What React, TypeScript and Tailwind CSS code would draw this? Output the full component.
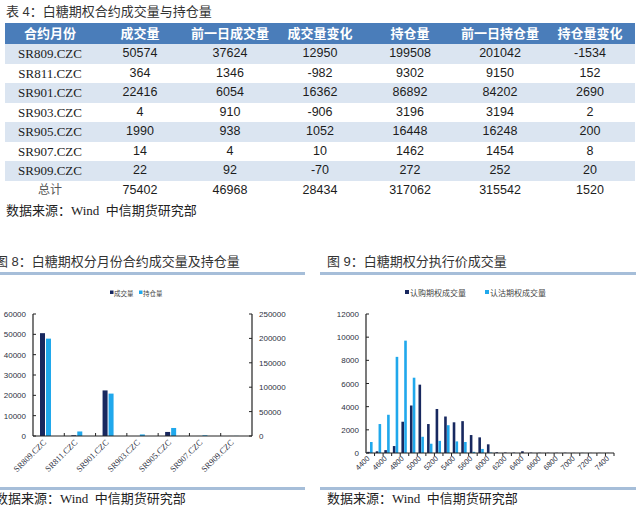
const SANS = "font-['Liberation_Sans','Noto_Sans_CJK_SC',sans-serif]";
const SERIF = "font-['Liberation_Serif',serif]";
const SRC = "font-['Liberation_Serif','Noto_Sans_CJK_SC',serif]";

const head = ["合约月份", "成交量", "前一日成交量", "成交量变化", "持仓量", "前一日持仓量", "持仓量变化"];

const rows = [
  ["SR809.CZC", "50574", "37624", "12950", "199508", "201042", "-1534"],
  ["SR811.CZC", "364", "1346", "-982", "9302", "9150", "152"],
  ["SR901.CZC", "22416", "6054", "16362", "86892", "84202", "2690"],
  ["SR903.CZC", "4", "910", "-906", "3196", "3194", "2"],
  ["SR905.CZC", "1990", "938", "1052", "16448", "16248", "200"],
  ["SR907.CZC", "14", "4", "10", "1462", "1454", "8"],
  ["SR909.CZC", "22", "92", "-70", "272", "252", "20"],
  ["总计", "75402", "46968", "28434", "317062", "315542", "1520"],
];

const months = [
  { name: "SR809.CZC", vol: 50574, oi: 199508 },
  { name: "SR811.CZC", vol: 364, oi: 9302 },
  { name: "SR901.CZC", vol: 22416, oi: 86892 },
  { name: "SR903.CZC", vol: 4, oi: 3196 },
  { name: "SR905.CZC", vol: 1990, oi: 16448 },
  { name: "SR907.CZC", vol: 14, oi: 1462 },
  { name: "SR909.CZC", vol: 22, oi: 272 },
];

// 执行价：认购 / 认沽
const calls = [100, 150, 250, 600, 2700, 4100, 5900, 2500, 3800, 3150, 2650, 2750, 1550, 1350, 750, 60, 40, 30, 150, 30, 20, 20, 20, 20, 10, 10, 10, 10, 10];
const puts = [950, 2500, 3300, 8300, 9700, 6500, 1400, 800, 1050, 2400, 1000, 950, 100, 350, 40, 0, 0, 0, 0, 0, 0, 0, 0, 0, 0, 0, 0, 0, 0];
const strikes = ["4400", "4600", "4800", "5000", "5200", "5400", "5600", "6000", "6200", "6400", "6600", "6800", "7000", "7200", "7400"];

const DARK = "#18285f";
const LIGHT = "#20a8ec";
const AXIS = "#222";
const LBL = "#2e3142";

function MonthChart() {
  const x0 = 33, x1 = 252, base = 435, top = 313;
  const h = base - top;
  const w = (x1 - x0) / months.length;
  return (
    <svg width={317} height={212} viewBox="-12 274 317 212" className={`block ${SANS}`}>
      <rect x={110} y={289.5} width={3.5} height={3.5} fill={DARK} />
      <text x={114} y={294.5} fontSize={6.5} fill="#444">成交量</text>
      <rect x={139} y={289.5} width={3.5} height={3.5} fill={LIGHT} />
      <text x={143} y={294.5} fontSize={6.5} fill="#444">持仓量</text>

      {[0, 10000, 20000, 30000, 40000, 50000, 60000].map((v) => {
        const y = base - (v / 60000) * h;
        return (
          <g key={v}>
            <line x1={x0} x2={x0 + 3} y1={y} y2={y} stroke={AXIS} strokeWidth={1} />
            <text x={26} y={y + 3} fontSize={8} textAnchor="end" fill={LBL}>{v}</text>
          </g>
        );
      })}
      {[0, 50000, 100000, 150000, 200000, 250000].map((v) => {
        const y = base - (v / 250000) * h;
        return (
          <g key={v}>
            <line x1={x1 - 3} x2={x1} y1={y} y2={y} stroke={AXIS} strokeWidth={1} />
            <text x={259} y={y + 3} fontSize={8} fill={LBL}>{v}</text>
          </g>
        );
      })}

      {months.map((m, i) => {
        const bx = x0 + w * i + 7;
        const dh = (m.vol / 60000) * h;
        const lh = (m.oi / 250000) * h;
        const cx = x0 + w * (i + 0.5);
        return (
          <g key={m.name}>
            <rect x={bx} y={base - dh} width={5} height={dh} fill={DARK} />
            <rect x={bx + 6} y={base - lh} width={5} height={lh} fill={LIGHT} />
            {i > 0 && <line x1={x0 + w * i} x2={x0 + w * i} y1={base} y2={base - 3} stroke={AXIS} strokeWidth={1} />}
            <text
              x={cx - 2}
              y={442}
              fontSize={8.5}
              textAnchor="end"
              fill={LBL}
              transform={`rotate(-45 ${cx - 2} 442)`}
              className={SERIF}
            >
              {m.name}
            </text>
          </g>
        );
      })}

      <line x1={x0} x2={x0} y1={top} y2={base} stroke={AXIS} strokeWidth={1.2} />
      <line x1={x1} x2={x1} y1={top} y2={base} stroke={AXIS} strokeWidth={1.2} />
      <line x1={x0} x2={x1} y1={base} y2={base} stroke={AXIS} strokeWidth={1.2} />
    </svg>
  );
}

function StrikeChart() {
  const x0 = 366, x1 = 614, base = 452, top = 313;
  const h = base - top;
  const n = calls.length;
  const w = (x1 - x0) / n;
  return (
    <svg width={316} height={212} viewBox="320 274 316 212" className={`block ${SANS}`}>
      <rect x={405} y={289} width={4} height={4} fill={DARK} />
      <text x={410} y={295} fontSize={8} fill="#444">认购期权成交量</text>
      <rect x={485} y={289} width={4} height={4} fill={LIGHT} />
      <text x={490} y={295} fontSize={8} fill="#444">认沽期权成交量</text>

      {[0, 2000, 4000, 6000, 8000, 10000, 12000].map((v) => {
        const y = base - (v / 12000) * h;
        return (
          <g key={v}>
            <line x1={x0} x2={x0 + 3} y1={y} y2={y} stroke={AXIS} strokeWidth={1} />
            <text x={359} y={y + 3} fontSize={8} textAnchor="end" fill={LBL}>{v}</text>
          </g>
        );
      })}

      {calls.map((c, i) => {
        const bx = x0 + w * i + 1.2;
        const ch = (c / 12000) * h;
        const ph = (puts[i] / 12000) * h;
        return (
          <g key={i}>
            <rect x={bx} y={base - ch} width={2.6} height={ch} fill={DARK} />
            <rect x={bx + 2.8} y={base - ph} width={2.6} height={ph} fill={LIGHT} />
            <line x1={x0 + w * (i + 1)} x2={x0 + w * (i + 1)} y1={base} y2={base + 3} stroke={AXIS} strokeWidth={1} />
          </g>
        );
      })}

      {strikes.map((s, k) => {
        const cx = x0 + w * (k * 2 + 0.5);
        return (
          <text
            key={s}
            x={cx}
            y={458}
            fontSize={7.5}
            textAnchor="end"
            fill={LBL}
            transform={`rotate(-45 ${cx} 458)`}
          >
            {s}
          </text>
        );
      })}

      <line x1={x0} x2={x0} y1={top} y2={base} stroke={AXIS} strokeWidth={1.2} />
      <line x1={x0} x2={x1} y1={base} y2={base} stroke={AXIS} strokeWidth={1.2} />
    </svg>
  );
}

function Source() {
  return (
    <div className={`h-[18px] flex items-center text-[13px] text-[#222] whitespace-nowrap ${SRC}`}>
      数据来源：Wind&nbsp; 中信期货研究部
    </div>
  );
}

export default function App() {
  return (
    <div className={`w-[640px] h-[507px] bg-white overflow-hidden ${SANS}`}>
      {/* 表 4 */}
      <div className="px-[5px]">
        <div className="h-[23px] flex items-center pl-[1px] text-[13px] text-[#333]">表 4：白糖期权合约成交量与持仓量</div>

        <div className="w-[630px]">
          <div className="grid grid-cols-7 h-[21px] bg-[#4a7dba] text-white text-[13px] font-bold">
            {head.map((t) => (
              <div key={t} className="flex items-center justify-center">{t}</div>
            ))}
          </div>
          {rows.map((r, i) => (
            <div key={r[0]} className={`grid grid-cols-7 h-[19.5px] text-[12.5px] text-[#1c1c1c] ${i % 2 === 0 && i < 7 ? "bg-[#dbe5f1]" : "bg-white"}`}>
              {r.map((c, j) => {
                let cls = "flex items-center justify-center";
                if (j === 0 && i < 7) cls += ` text-[13px] ${SERIF}`;
                if (j === 0 && i === 7) cls += " text-[12px] text-[#555]";
                return (
                  <div key={j} className={cls}>
                    {c}
                  </div>
                );
              })}
            </div>
          ))}
        </div>

        <div className="mt-[2px] pl-[1px]">
          <Source />
        </div>
      </div>

      {/* 图 8 / 图 9 */}
      <div className="flex mt-[32px]">
        <div className="-ml-[12px] w-[317px] shrink-0">
          <div className="h-[20px] flex items-center pl-[7px] text-[13px] text-[#333] whitespace-nowrap">图 8：白糖期权分月份合约成交量及持仓量</div>
          <div className="h-[3px] bg-[#a6bed9]" />
          <MonthChart />
          <div className="h-[3px] bg-[#a6bed9]" />
          <div className="pl-[7px]">
            <Source />
          </div>
        </div>

        <div className="ml-[15px] w-[316px] shrink-0">
          <div className="h-[20px] flex items-center pl-[7px] text-[13px] text-[#333] whitespace-nowrap">图 9：白糖期权分执行价成交量</div>
          <div className="h-[3px] bg-[#a6bed9]" />
          <StrikeChart />
          <div className="h-[3px] bg-[#a6bed9]" />
          <div className="pl-[7px]">
            <Source />
          </div>
        </div>
      </div>
    </div>
  );
}
